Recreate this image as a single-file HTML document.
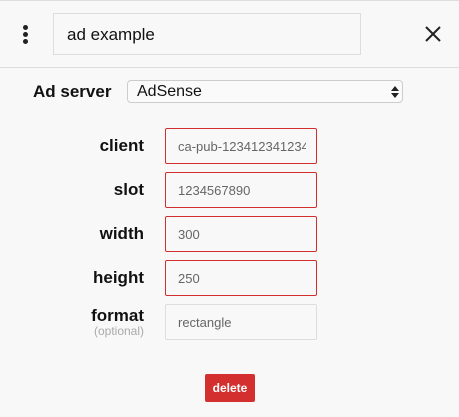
<!DOCTYPE html>
<html><head><style>
body{margin:0;width:459px;height:417px;background:#f8f8f8;font-family:"Liberation Sans",sans-serif;position:relative;overflow:hidden}
.a{position:absolute;box-sizing:border-box}
.top{left:0;top:0;width:459px;height:1px;background:#ddd}
.div{left:0;top:67px;width:459px;height:1px;background:#ddd}
.name{left:53px;top:13px;width:308px;height:42px;border:1px solid #ddd;background:#f8f8f8;font-size:17px;padding:11px 0 0 13px;color:#111}
.dot{width:5px;height:5px;border-radius:50%;background:#222;left:23px}
.lbl{font-weight:bold;font-size:17px;color:#111;text-align:right;width:120px;left:24px}
.f{left:165px;width:152px;height:36px;border:1px solid #d32f2f;border-radius:2px;font-size:13px;color:#666;padding:10px 0 0 12px;white-space:nowrap;overflow:hidden}
.f span{display:block;width:128px;overflow:hidden}
</style></head><body>
<div class="a top"></div>
<div class="a dot" style="top:25px"></div>
<div class="a dot" style="top:32px"></div>
<div class="a dot" style="top:39px"></div>
<div class="a name">ad example</div>
<svg class="a" style="left:424px;top:25px" width="18" height="18" viewBox="0 0 18 18"><path d="M2 2L16 16M16 2L2 16" stroke="#222" stroke-width="2"/></svg>
<div class="a div"></div>
<div class="a" style="left:33px;top:82px;font-weight:bold;font-size:17px;color:#111">Ad server</div>
<div class="a" style="left:127px;top:80px;width:276px;height:23px;border:1px solid #ccc;border-radius:4px;background:#fafafa;font-size:16px;padding:2px 0 0 9px;color:#111">AdSense
<svg style="position:absolute;right:3px;top:4px" width="8" height="14" viewBox="0 0 8 14"><path d="M0 6L4 1L8 6Z M0 8L4 13L8 8Z" fill="#222"/></svg></div>
<div class="a lbl" style="top:136px">client</div>
<div class="a f" style="top:128px"><span>ca-pub-123412341234</span></div>
<div class="a lbl" style="top:180px">slot</div>
<div class="a f" style="top:172px">1234567890</div>
<div class="a lbl" style="top:224px">width</div>
<div class="a f" style="top:216px">300</div>
<div class="a lbl" style="top:268px">height</div>
<div class="a f" style="top:260px">250</div>
<div class="a lbl" style="top:306px">format</div>
<div class="a lbl" style="top:324px;font-weight:normal;font-size:12px;color:#aaa">(optional)</div>
<div class="a f" style="top:304px;border-color:#ddd">rectangle</div>
<div class="a" style="left:205px;top:374px;width:50px;height:28px;background:#d32f2f;border-radius:2px;color:#fff;font-weight:bold;font-size:12px;text-align:center;line-height:28px">delete</div>
</body></html>
